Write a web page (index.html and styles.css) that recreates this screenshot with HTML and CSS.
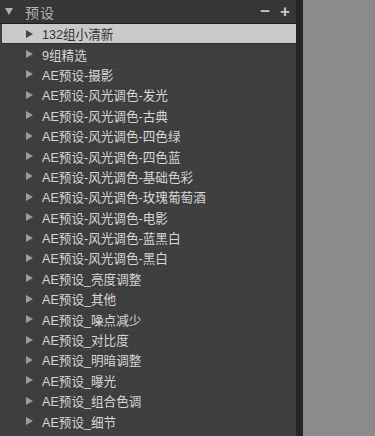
FILE: index.html
```
<!DOCTYPE html>
<html lang="zh">
<head>
    <meta charset="UTF-8">
    <title>预设</title>
    <link rel="stylesheet" href="styles.css">
</head>
<body>
<div class="page">
    <div class="panel">
        <div class="head">
            <span class="head-arrow"></span>
            <span class="head-title">预设</span>
            <span class="head-tools"><span class="tool">&minus;</span><span class="tool">+</span></span>
        </div>
        <ul class="list">
            <li class="item selected"><span class="arrow"></span>132组小清新</li>
            <li class="item"><span class="arrow"></span>9组精选</li>
            <li class="item"><span class="arrow"></span>AE预设-摄影</li>
            <li class="item"><span class="arrow"></span>AE预设-风光调色-发光</li>
            <li class="item"><span class="arrow"></span>AE预设-风光调色-古典</li>
            <li class="item"><span class="arrow"></span>AE预设-风光调色-四色绿</li>
            <li class="item"><span class="arrow"></span>AE预设-风光调色-四色蓝</li>
            <li class="item"><span class="arrow"></span>AE预设-风光调色-基础色彩</li>
            <li class="item"><span class="arrow"></span>AE预设-风光调色-玫瑰葡萄酒</li>
            <li class="item"><span class="arrow"></span>AE预设-风光调色-电影</li>
            <li class="item"><span class="arrow"></span>AE预设-风光调色-蓝黑白</li>
            <li class="item"><span class="arrow"></span>AE预设-风光调色-黑白</li>
            <li class="item"><span class="arrow"></span>AE预设_亮度调整</li>
            <li class="item"><span class="arrow"></span>AE预设_其他</li>
            <li class="item"><span class="arrow"></span>AE预设_噪点减少</li>
            <li class="item"><span class="arrow"></span>AE预设_对比度</li>
            <li class="item"><span class="arrow"></span>AE预设_明暗调整</li>
            <li class="item"><span class="arrow"></span>AE预设_曝光</li>
            <li class="item"><span class="arrow"></span>AE预设_组合色调</li>
            <li class="item"><span class="arrow"></span>AE预设_细节</li>
        </ul>
    </div>
    <div class="side"></div>
</div>
</body>
</html>
```
FILE: styles.css
```
html, body {
    margin: 0;
    padding: 0;
    height: 100%;
    background: #8c8c8c;
}
.page {
    display: flex;
    height: 436px;
    overflow: hidden;
    font-family: "Liberation Sans", "Noto Sans CJK SC", sans-serif;
}
.panel {
    width: 296px;
    background: #3e3e3e;
    border-right: 7px solid #262626;
    overflow: hidden;
}
.side {
    flex: 1;
    background: #8b8b8b;
}
.head {
    height: 23px;
    display: flex;
    align-items: center;
    background: #363636;
    border-bottom: 1px solid #1e1e1e;
    color: #b4b4b4;
}
.head-arrow {
    width: 0;
    height: 0;
    border-left: 4px solid transparent;
    border-right: 4px solid transparent;
    border-top: 7px solid #b0b0b0;
    margin-left: 5px;
    margin-right: 12px;
}
.head-title {
    font-size: 14px;
    letter-spacing: 1px;
}
.head-tools {
    margin-left: auto;
    display: flex;
    gap: 10px;
    padding-right: 6px;
    font-size: 17px;
    font-weight: bold;
    color: #c8c8c8;
}
.list {
    list-style: none;
    margin: 0;
    padding: 0;
}
.item {
    height: 20.4px;
    display: flex;
    align-items: center;
    font-size: 12.6px;
    color: #d6d6d6;
    border-bottom: 1px solid #424242;
    box-sizing: border-box;
}
.item.selected {
    background: #c9c9c9;
    color: #333;
    margin-left: 2px;
    border-bottom: 1px solid #2a2a2a;
}
.arrow {
    width: 0;
    height: 0;
    border-top: 4px solid transparent;
    border-bottom: 4px solid transparent;
    border-left: 7px solid #9c9c9c;
    margin-left: 26px;
    margin-right: 9px;
}
.selected .arrow {
    border-left-color: #444;
    margin-left: 24px;
}
```
